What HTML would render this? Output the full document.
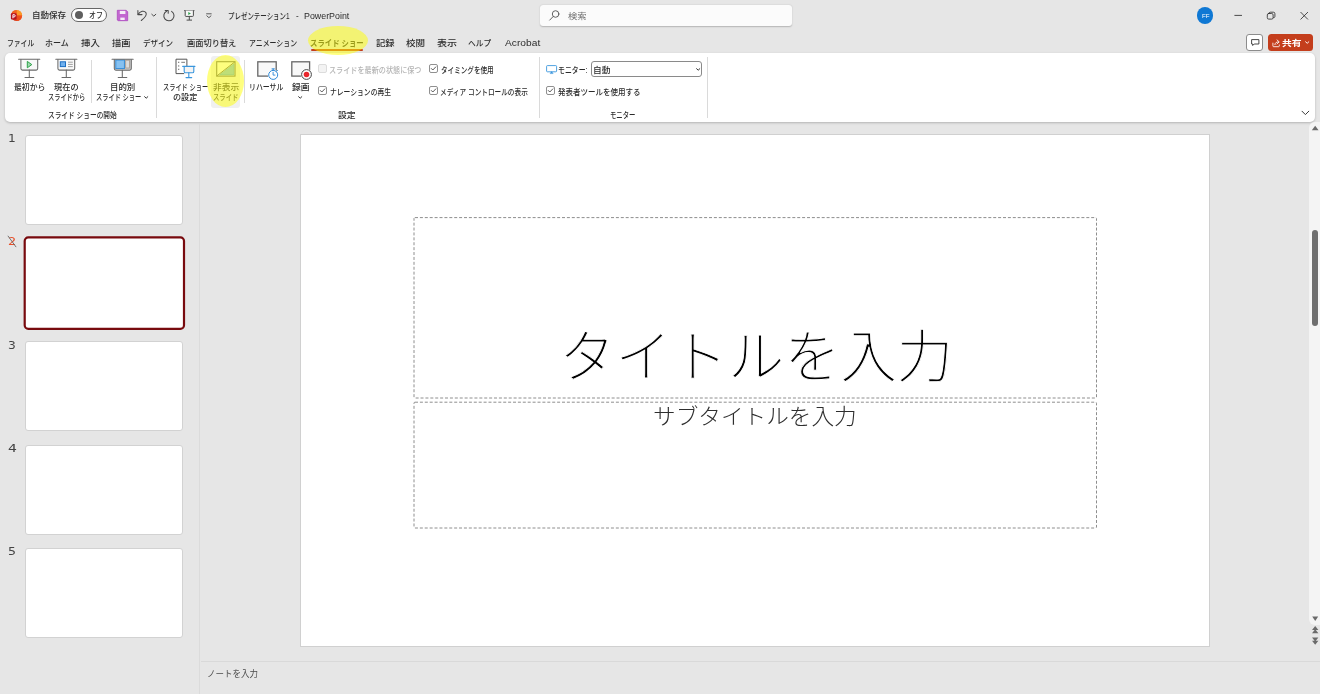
<!DOCTYPE html>
<html lang="ja">
<head>
<meta charset="utf-8">
<title>プレゼンテーション1 - PowerPoint</title>
<style>
*{box-sizing:border-box;margin:0;padding:0}
html,body{width:1320px;height:694px;overflow:hidden;background:#e6e6e6}
body{position:relative;font-family:"Liberation Sans","Noto Sans CJK JP",sans-serif;color:#2b2b2b}
.a{position:absolute}
.txl{position:absolute;left:0;top:0;width:1320px;height:694px;will-change:transform}
.tx{position:absolute;white-space:nowrap;line-height:1;transform-origin:0 0}
svg{position:absolute;overflow:visible}
.ribbon{left:5.4px;top:53px;width:1309.8px;height:69px;background:#fff;border-radius:5px;box-shadow:0 1px 2.5px rgba(0,0,0,.22)}
.gsep{width:1px;background:#dadada;top:57px;height:61px}
.bsep{width:1px;background:#dadada;top:60px;height:43px}
.cb{width:9px;height:9px;border:1px solid #909090;border-radius:2px;background:#fff}
.cb.dis{border-color:#dcdcdc;background:#f3f3f3}
.thumb{left:25px;width:158px;height:90px;background:#fff;border:1px solid #d2d2d2;border-radius:3px}
.hl{background:rgba(255,255,0,.5);border-radius:50%}
</style>
</head>
<body>
<!-- ===== title bar ===== -->
<!-- app logo -->
<svg class="a" style="left:10px;top:9px" width="13" height="13" viewBox="0 0 13 13">
  <defs>
    <linearGradient id="lg1" x1="0" y1="1" x2="1" y2="0"><stop offset="0" stop-color="#c8281c"/><stop offset=".55" stop-color="#f05a1e"/><stop offset="1" stop-color="#fba13a"/></linearGradient>
  </defs>
  <circle cx="6.6" cy="6.5" r="5.5" fill="url(#lg1)"/>
  <path d="M6.6 1A5.5 5.5 0 0 1 12.1 6.5L6.6 6.5Z" fill="#fc9a28" opacity=".95"/>
  <path d="M12.1 6.5A5.5 5.5 0 0 1 6.6 12L6.6 6.5Z" fill="#ee4d1c" opacity=".9"/>
  <path d="M6.6 1A5.5 5.5 0 0 0 1.6 4.2L6.6 6.5Z" fill="#f0601e" opacity=".9"/>
  <rect x=".9" y="4.2" width="5.7" height="6.4" rx="1" fill="#b5121f"/>
  <path d="M2.9 9.3V5.7H4.1A1.1 1.1 0 0 1 4.1 7.9H3" fill="none" stroke="#fff" stroke-width=".95"/>
</svg>
<!-- autosave toggle -->
<div class="a" style="left:71px;top:8px;width:36px;height:14px;border:1px solid #666;border-radius:7px;background:#fff"></div>
<div class="a" style="left:74.5px;top:10.7px;width:8.6px;height:8.6px;border-radius:50%;background:#5f5f5f"></div>
<!-- save -->
<svg class="a" style="left:117px;top:10px" width="11" height="11" viewBox="0 0 11 11">
  <path d="M.3 .3H9.2L10.7 1.8V10.7H1L.3 10Z" fill="#c266d0" stroke="#a93fbb" stroke-width=".7"/>
  <rect x="2.8" y=".9" width="5.6" height="3.1" fill="#f4ecf6"/>
  <rect x="3.3" y="7.6" width="4.4" height="2.4" fill="#f4ecf6"/>
</svg>
<!-- undo -->
<svg class="a" style="left:137px;top:10px" width="20" height="11" viewBox="0 0 20 11" fill="none" stroke="#4a4a4a" stroke-width="1.05" stroke-linecap="round" stroke-linejoin="round">
  <path d="M.9 .6V4.6H5"/>
  <path d="M1.1 4.4C3.2 1 7.2 .2 8.9 2.6C10.3 4.8 8.3 7.3 4.3 10.5"/>
  <path d="M14.8 4.3L16.8 6.1L18.8 4.3" stroke-width="1"/>
</svg>
<!-- redo -->
<svg class="a" style="left:163px;top:10px" width="12" height="11" viewBox="0 0 12 11" fill="none" stroke="#4a4a4a" stroke-width="1.05" stroke-linecap="round" stroke-linejoin="round">
  <path d="M8.6 1.4A5.1 5.1 0 1 1 3.6 1.2"/>
  <path d="M2.2 .4H5.2V3.3"/>
</svg>
<!-- present from beginning (small) -->
<svg class="a" style="left:183.5px;top:10px" width="11" height="11" viewBox="0 0 11 11" fill="none" stroke="#4a4a4a" stroke-width="1">
  <path d="M.2 .6H10.4"/>
  <path d="M1.2 .6V5.6Q1.2 6.4 2 6.4H8.6Q9.4 6.4 9.4 5.6V.6" fill="#f7f7f7"/>
  <path d="M5.3 6.4V10M2.6 10.1H8"/>
  <path d="M4.3 1.9L6.9 3.5L4.3 5.1Z" fill="#2aa148" stroke="none"/>
</svg>
<!-- customize QAT -->
<svg class="a" style="left:206px;top:12.5px" width="6" height="6" viewBox="0 0 6 6" fill="none" stroke="#4a4a4a" stroke-width=".9" stroke-linecap="round" stroke-linejoin="round">
  <path d="M.6 .8H5.2"/><path d="M.8 2.8L2.9 4.7L5 2.8"/>
</svg>
<!-- search box -->
<div class="a" style="left:540px;top:5px;width:252px;height:21px;background:#fbfbfb;border-radius:3px;box-shadow:0 .8px 1.5px rgba(0,0,0,.22)"></div>
<svg class="a" style="left:548.5px;top:10px" width="11" height="11" viewBox="0 0 11 11" fill="none" stroke="#5a5a5a" stroke-width=".95" stroke-linecap="round">
  <circle cx="6.6" cy="4" r="3.3"/><path d="M4.2 6.5L.7 10.1"/>
</svg>
<!-- avatar -->
<div class="a" style="left:1196.7px;top:7px;width:16.8px;height:16.8px;border-radius:50%;background:#0f78d4"></div>
<!-- window controls -->
<svg class="a" style="left:1230px;top:8px" width="84" height="16" viewBox="0 0 84 16" fill="none" stroke="#2f2f2f" stroke-width=".85" stroke-linecap="round">
  <path d="M4.8 7.4H11.6"/>
  <rect x="37.3" y="5.5" width="5.8" height="5.6" rx="1.4"/>
  <path d="M39 5.3Q39 4.2 40.2 4.2H43.4Q44.9 4.2 44.9 5.7V8.6Q44.9 9.6 43.6 9.7"/>
  <path d="M70.8 4.3L77.7 11.2M77.7 4.3L70.8 11.2"/>
</svg>

<!-- ===== tabs ===== -->
<!-- active tab underline -->
<div class="a" style="left:311px;top:49px;width:52px;height:1.6px;background:#c43e1c;border-radius:1px"></div>
<!-- comments button -->
<div class="a" style="left:1246.3px;top:34px;width:16.4px;height:16.5px;border:1px solid #8c8c8c;border-radius:3px;background:#fff"></div>
<svg class="a" style="left:1250.5px;top:38.5px" width="9" height="8" viewBox="0 0 9 8" fill="none" stroke="#333" stroke-width=".9" stroke-linejoin="round">
  <path d="M.6 .6H7.9V5H3.2L1.7 6.5V5H.6Z"/>
</svg>
<!-- share button -->
<div class="a" style="left:1268px;top:34px;width:44.6px;height:16.6px;border-radius:3.5px;background:#c43e1c"></div>
<svg class="a" style="left:1271.6px;top:38.6px" width="9" height="9" viewBox="0 0 9 9" fill="none" stroke="#fff" stroke-width=".85" stroke-linecap="round" stroke-linejoin="round">
  <path d="M.9 4.1V6.9Q.9 7.7 1.7 7.7H6.5Q7.3 7.7 7.3 6.9V5.9"/>
  <path d="M2.9 5.7C3 3.9 4.2 2.9 6.2 2.9"/>
  <path d="M5 .9L7.2 2.9L5 4.9"/>
</svg>
<svg class="a" style="left:1305.3px;top:41px" width="5" height="4" viewBox="0 0 5 4" fill="none" stroke="#fff" stroke-width=".95" stroke-linecap="round" stroke-linejoin="round">
  <path d="M.6 .8L2.2 2.3L3.8 .8"/>
</svg>

<!-- ===== ribbon ===== -->
<div class="a ribbon"></div>
<!-- group separators -->
<div class="a gsep" style="left:156px"></div>
<div class="a gsep" style="left:538.5px"></div>
<div class="a gsep" style="left:706.7px"></div>
<div class="a bsep" style="left:91px"></div>
<div class="a bsep" style="left:244.2px"></div>
<!-- hidden-slide button hover bg -->
<div class="a" style="left:211.2px;top:55.8px;width:28.6px;height:51.8px;background:#f0f0f0;border-radius:3px"></div>
<!-- icon: from beginning -->
<svg class="a" style="left:18px;top:58px" width="23" height="21" viewBox="0 0 23 21" fill="none" stroke="#6a6a6a" stroke-width="1.05">
  <path d="M2.9 1.2V10.6Q2.9 12.1 4.4 12.1H18.2Q19.7 12.1 19.7 10.6V1.2" fill="#f8f8f8"/>
  <path d="M.6 1.2H21.8" stroke-linecap="round"/>
  <path d="M11.3 12.1V19.4M7 19.4H15.8" stroke-linecap="round"/>
  <path d="M9.3 3.4L13.8 6.6L9.3 9.8Z" fill="#9fd8ae" stroke="#2ea34a" stroke-width="1" stroke-linejoin="round"/>
</svg>
<!-- icon: from current slide -->
<svg class="a" style="left:55px;top:58px" width="23" height="21" viewBox="0 0 23 21" fill="none" stroke="#6a6a6a" stroke-width="1.05">
  <path d="M2.9 1.2V10.6Q2.9 12.1 4.4 12.1H18.2Q19.7 12.1 19.7 10.6V1.2" fill="#f8f8f8"/>
  <path d="M.8 1.2H21.9" stroke-linecap="round"/>
  <path d="M11.3 12.1V19.4M7 19.4H15.7" stroke-linecap="round"/>
  <rect x="5.3" y="3.8" width="5.2" height="4.8" fill="#6fb0ee" stroke="#1b6ec2" stroke-width="1"/>
  <path d="M13 4.2H17.8M13 6.4H17.8M13 8.6H17.8" stroke="#8a8a8a" stroke-width=".8"/>
</svg>
<!-- icon: custom slide show -->
<svg class="a" style="left:111px;top:58px" width="23" height="21" viewBox="0 0 23 21" fill="none" stroke="#6a6a6a" stroke-width="1.05">
  <path d="M3.3 1.2V10.6Q3.3 12.2 4.8 12.2H18.8Q20.3 12.2 20.3 10.6V1.2" fill="#c9c9c9"/>
  <rect x="4.8" y="2" width="8.6" height="8.6" fill="#86c1f1" stroke="#2b88d8" stroke-width=".9"/>
  <rect x="14.7" y="2.2" width="3.7" height="7.8" fill="#dcdcdc" stroke="#a89a8c" stroke-width=".8"/>
  <path d="M1 1.2H22.2" stroke-linecap="round"/>
  <path d="M11.3 12.2V19.4M7.2 19.4H15.8" stroke-linecap="round"/>
</svg>
<svg class="a" style="left:143.8px;top:95.8px" width="5" height="4" viewBox="0 0 5 4" fill="none" stroke="#333" stroke-width="1" stroke-linecap="round" stroke-linejoin="round"><path d="M.6 .7L2.2 2.2L3.8 .7"/></svg>
<!-- icon: set up slide show -->
<svg class="a" style="left:175px;top:58px" width="21" height="21" viewBox="0 0 21 21" fill="none">
  <path d="M9.2 15.6H1V1.2H11.9V8.2" stroke="#555" stroke-width="1"/>
  <rect x="3" y="3.7" width="1.3" height="1.3" fill="#8a8a8a"/><rect x="3" y="7.3" width="1.3" height="1.3" fill="#8a8a8a"/><rect x="3" y="10.7" width="1.3" height="1.3" fill="#8a8a8a"/>
  <path d="M6.3 4.3H10" stroke="#6a6a6a" stroke-width=".9"/>
  <path d="M9.2 8.4V13.4Q9.2 14.8 10.6 14.8H17.4Q18.8 14.8 18.8 13.4V8.4" fill="#f4f4f4" stroke="#3a96dd" stroke-width="1.1"/>
  <path d="M7.7 8.4H19.9" stroke="#3a96dd" stroke-width="1.1" stroke-linecap="round"/>
  <path d="M13.8 14.8V19.5M11 19.6H16.7" stroke="#3a96dd" stroke-width="1.1" stroke-linecap="round"/>
</svg>
<!-- icon: hide slide -->
<svg class="a" style="left:215.5px;top:60.5px" width="20.5" height="16" viewBox="0 0 20.5 16" fill="none">
  <rect x=".7" y=".7" width="18.3" height="14.4" fill="#fdfdfd" stroke="#6a6a6a" stroke-width="1.1"/>
  <path d="M3.6 13.9L17.9 2.9V13.9Z" fill="#7dbdf0" stroke="#4a9fe0" stroke-width=".7" stroke-linejoin="round"/>
  <path d="M.9 14.9L18.8 .9" stroke="#6a6a6a" stroke-width="1"/>
</svg>
<!-- icon: rehearse timings -->
<svg class="a" style="left:256.5px;top:60.5px" width="23" height="21" viewBox="0 0 23 21" fill="none">
  <rect x=".8" y=".8" width="18.4" height="14.3" fill="#f8f8f8" stroke="#666" stroke-width="1.3"/>
  <circle cx="16.2" cy="13.9" r="5.4" fill="#fff"/>
  <circle cx="16.2" cy="13.9" r="4.5" fill="#fff" stroke="#2b88d8" stroke-width="1"/>
  <path d="M16.2 9.4V8.1M15 7.9H17.4M19.6 10.3L20.5 9.4" stroke="#2b88d8" stroke-width="1" stroke-linecap="round"/>
  <path d="M16.1 11.3V14.1H18" stroke="#2b88d8" stroke-width=".9" stroke-linecap="round"/>
</svg>
<!-- icon: record -->
<svg class="a" style="left:290.5px;top:60.5px" width="23" height="21" viewBox="0 0 23 21" fill="none">
  <rect x=".8" y=".8" width="17.8" height="14.3" fill="#f8f8f8" stroke="#666" stroke-width="1.3"/>
  <circle cx="15.5" cy="13.5" r="5.8" fill="#fff"/>
  <circle cx="15.5" cy="13.5" r="4.9" fill="#fff" stroke="#444" stroke-width="1"/>
  <circle cx="15.5" cy="13.5" r="2.8" fill="#e8262c"/>
</svg>
<svg class="a" style="left:298.2px;top:96.4px" width="5" height="4" viewBox="0 0 5 4" fill="none" stroke="#333" stroke-width="1" stroke-linecap="round" stroke-linejoin="round"><path d="M.6 .7L2.2 2.2L3.8 .7"/></svg>
<!-- checkboxes -->
<div class="a cb dis" style="left:318.3px;top:64px"></div>
<div class="a cb" style="left:318.3px;top:86px"></div>
<div class="a cb" style="left:429.2px;top:64px"></div>
<div class="a cb" style="left:429.2px;top:86px"></div>
<div class="a cb" style="left:545.8px;top:86px"></div>
<svg class="a" style="left:318.3px;top:86px" width="9" height="9" viewBox="0 0 9 9" fill="none" stroke="#3c3c3c" stroke-width=".85" stroke-linecap="round" stroke-linejoin="round"><path d="M2.3 4.5L3.8 6L6.8 2.9"/></svg>
<svg class="a" style="left:429.2px;top:64px" width="9" height="9" viewBox="0 0 9 9" fill="none" stroke="#3c3c3c" stroke-width=".85" stroke-linecap="round" stroke-linejoin="round"><path d="M2.3 4.5L3.8 6L6.8 2.9"/></svg>
<svg class="a" style="left:429.2px;top:86px" width="9" height="9" viewBox="0 0 9 9" fill="none" stroke="#3c3c3c" stroke-width=".85" stroke-linecap="round" stroke-linejoin="round"><path d="M2.3 4.5L3.8 6L6.8 2.9"/></svg>
<svg class="a" style="left:545.8px;top:86px" width="9" height="9" viewBox="0 0 9 9" fill="none" stroke="#3c3c3c" stroke-width=".85" stroke-linecap="round" stroke-linejoin="round"><path d="M2.3 4.5L3.8 6L6.8 2.9"/></svg>
<!-- monitor icon -->
<svg class="a" style="left:546px;top:64.8px" width="12" height="10" viewBox="0 0 12 10" fill="none" stroke="#3a96dd" stroke-width=".9" stroke-linejoin="round">
  <rect x=".6" y=".6" width="10" height="6.2" rx=".8" fill="#fff"/>
  <path d="M5.6 6.6L7.2 8.6H4Z" fill="#3a96dd" stroke-width=".4"/>
</svg>
<!-- monitor select -->
<div class="a" style="left:590.7px;top:61.3px;width:111.4px;height:15.8px;border:1px solid #8a8a8a;border-radius:3px;background:#fff"></div>
<svg class="a" style="left:695.6px;top:67.5px" width="5" height="4" viewBox="0 0 5 4" fill="none" stroke="#333" stroke-width="1" stroke-linecap="round" stroke-linejoin="round"><path d="M.6 .7L2.2 2.2L3.8 .7"/></svg>
<!-- collapse ribbon -->
<svg class="a" style="left:1301px;top:110px" width="9" height="6" viewBox="0 0 9 6" fill="none" stroke="#3a3a3a" stroke-width="1" stroke-linecap="round" stroke-linejoin="round"><path d="M1 1.2L4.4 4.6L7.8 1.2"/></svg>

<!-- ===== left panel ===== -->
<div class="a" style="left:199px;top:124px;width:1px;height:570px;background:#dbdbdb"></div>
<div class="a thumb" style="top:135px"></div>
<svg class="a" style="left:0;top:0" width="200" height="340"><rect x="24.7" y="237.4" width="159.3" height="91.4" rx="3.6" fill="#fff" stroke="#780a0e" stroke-width="2.2"/></svg>
<div class="a thumb" style="top:341.4px"></div>
<div class="a thumb" style="top:444.8px"></div>
<div class="a thumb" style="top:548.2px"></div>

<!-- ===== main ===== -->
<!-- slide -->
<div class="a" style="left:300px;top:134px;width:910px;height:513px;background:#fff;border:1px solid #d0d0d0"></div>
<!-- placeholders -->
<svg class="a" style="left:0;top:0" width="1320" height="694" fill="none" stroke="#8e8e8e" stroke-width="1" stroke-dasharray="3 1.9" shape-rendering="auto">
  <rect x="414" y="217.6" width="682.5" height="180.4" rx="1"/>
  <rect x="414" y="402.2" width="682.5" height="125.8" rx="1"/>
</svg>
<!-- notes separator -->
<div class="a" style="left:201px;top:661px;width:1119px;height:1px;background:#d9d9d9"></div>
<!-- vertical scrollbar -->
<div class="a" style="left:1309.2px;top:122px;width:12px;height:502.5px;background:#f4f4f4;border-radius:6px 0 0 6px"></div>
<div class="a" style="left:1312.3px;top:229.6px;width:6.2px;height:96px;background:#6e6e6e;border-radius:3.1px"></div>
<svg class="a" style="left:1311px;top:124px" width="9" height="530" viewBox="0 0 9 530" fill="#6a6a6a">
  <path d="M.8 6.2L4.2 1.8L7.6 6.2Z"/>
  <path d="M1.2 492.6L4.2 497L7.2 492.6Z"/>
  <path d="M1 506L4.2 502L7.4 506ZM1 509.2L4.2 505.2L7.4 509.2Z"/>
  <path d="M1 513.6L4.2 517.6L7.4 513.6ZM1 516.8L4.2 520.8L7.4 516.8Z"/>
</svg>

<!-- ===== text ===== -->
<div class="txl">
<span class="tx" id="t0" style="left:32.00px;top:12.00px;font-size:8.25px;color:#2b2b2b;font-weight:500;transform:scale(1.0318,1.0000);">自動保存</span>
<span class="tx" id="t1" style="left:89.00px;top:12.00px;font-size:8.25px;color:#2b2b2b;font-weight:500;transform:scale(0.8390,1.0000);">オフ</span>
<span class="tx" id="t2" style="left:228.00px;top:13.00px;font-size:8.25px;color:#2b2b2b;font-weight:500;transform:scale(0.7831,1.0000);">プレゼンテーション1</span>
<span class="tx" id="t3" style="left:296.00px;top:13.38px;font-size:8.25px;color:#2b2b2b;font-weight:500;transform:scale(0.9817,1.0000);">-</span>
<span class="tx" id="t4" style="left:304.00px;top:13.45px;font-size:8.25px;color:#2b2b2b;font-weight:500;transform:scale(1.0728,1.0000);">PowerPoint</span>
<span class="tx" id="t5" style="left:568.00px;top:13.00px;font-size:8.25px;color:#6e6e6e;font-weight:400;transform:scale(1.1252,1.0000);">検索</span>
<span class="tx" id="t6" style="left:1202.00px;top:13.06px;font-size:6px;color:#fff;font-weight:500;transform:scale(1.0306,1.0000);">FF</span>
<span class="tx" id="t7" style="left:7.00px;top:40.00px;font-size:8.25px;color:#2b2b2b;font-weight:500;transform:scale(0.8257,1.0000);">ファイル</span>
<span class="tx" id="t8" style="left:45.00px;top:40.00px;font-size:8.25px;color:#2b2b2b;font-weight:500;transform:scale(0.9703,1.0000);">ホーム</span>
<span class="tx" id="t9" style="left:81.00px;top:40.00px;font-size:8.25px;color:#2b2b2b;font-weight:500;transform:scale(1.1398,1.0000);">挿入</span>
<span class="tx" id="t10" style="left:112.00px;top:40.00px;font-size:8.25px;color:#2b2b2b;font-weight:500;transform:scale(1.1136,1.0000);">描画</span>
<span class="tx" id="t11" style="left:143.00px;top:40.00px;font-size:8.25px;color:#2b2b2b;font-weight:500;transform:scale(0.9139,1.0000);">デザイン</span>
<span class="tx" id="t12" style="left:187.00px;top:40.00px;font-size:8.25px;color:#2b2b2b;font-weight:500;transform:scale(0.9963,1.0000);">画面切り替え</span>
<span class="tx" id="t13" style="left:249.00px;top:40.00px;font-size:8.25px;color:#2b2b2b;font-weight:500;transform:scale(0.8374,1.0000);">アニメーション</span>
<span class="tx" id="t14" style="left:310.00px;top:40.00px;font-size:8.25px;color:#333;font-weight:700;transform:scale(0.8943,1.0000);">スライド ショー</span>
<span class="tx" id="t15" style="left:376.00px;top:40.00px;font-size:8.25px;color:#2b2b2b;font-weight:500;transform:scale(1.1281,1.0000);">記録</span>
<span class="tx" id="t16" style="left:406.00px;top:40.00px;font-size:8.25px;color:#2b2b2b;font-weight:500;transform:scale(1.1571,1.0000);">校閲</span>
<span class="tx" id="t17" style="left:437.00px;top:40.00px;font-size:8.25px;color:#2b2b2b;font-weight:500;transform:scale(1.2130,1.0000);">表示</span>
<span class="tx" id="t18" style="left:468.00px;top:40.00px;font-size:8.25px;color:#2b2b2b;font-weight:500;transform:scale(0.9330,1.0000);">ヘルプ</span>
<span class="tx" id="t19" style="left:505.00px;top:40.18px;font-size:8.25px;color:#2b2b2b;font-weight:500;transform:scale(1.2386,1.0000);">Acrobat</span>
<span class="tx" id="t20" style="left:1282.00px;top:40.00px;font-size:8.25px;color:#fff;font-weight:700;transform:scale(1.1878,1.0000);">共有</span>
<span class="tx" id="t21" style="left:14.00px;top:84.00px;font-size:8.25px;color:#2b2b2b;font-weight:500;transform:scale(0.9494,1.0000);">最初から</span>
<span class="tx" id="t22" style="left:54.00px;top:84.00px;font-size:8.25px;color:#2b2b2b;font-weight:500;transform:scale(0.9962,1.0000);">現在の</span>
<span class="tx" id="t23" style="left:48.00px;top:94.00px;font-size:8.25px;color:#2b2b2b;font-weight:500;transform:scale(0.7525,1.0000);">スライドから</span>
<span class="tx" id="t24" style="left:110.00px;top:84.00px;font-size:8.25px;color:#2b2b2b;font-weight:500;transform:scale(1.0210,1.0000);">目的別</span>
<span class="tx" id="t25" style="left:96.00px;top:94.00px;font-size:8.25px;color:#2b2b2b;font-weight:500;transform:scale(0.7538,1.0000);">スライド ショー</span>
<span class="tx" id="t26" style="left:163.00px;top:84.00px;font-size:8.25px;color:#2b2b2b;font-weight:500;transform:scale(0.7517,1.0000);">スライド ショー</span>
<span class="tx" id="t27" style="left:173.00px;top:94.00px;font-size:8.25px;color:#2b2b2b;font-weight:500;transform:scale(0.9801,1.0000);">の設定</span>
<span class="tx" id="t28" style="left:213.00px;top:84.00px;font-size:8.25px;color:#444;font-weight:500;transform:scale(1.0605,1.0000);">非表示</span>
<span class="tx" id="t29" style="left:213.00px;top:94.00px;font-size:8.25px;color:#444;font-weight:500;transform:scale(0.7695,1.0000);">スライド</span>
<span class="tx" id="t30" style="left:249.00px;top:84.00px;font-size:8.25px;color:#2b2b2b;font-weight:500;transform:scale(0.8350,1.0000);">リハーサル</span>
<span class="tx" id="t31" style="left:292.00px;top:84.00px;font-size:8.25px;color:#2b2b2b;font-weight:500;transform:scale(1.0605,1.0000);">録画</span>
<span class="tx" id="t32" style="left:329.00px;top:67.00px;font-size:8.25px;color:#b4b4b4;font-weight:500;transform:scale(0.8622,1.0000);">スライドを最新の状態に保つ</span>
<span class="tx" id="t33" style="left:330.00px;top:89.00px;font-size:8.25px;color:#2b2b2b;font-weight:500;transform:scale(0.8240,1.0000);">ナレーションの再生</span>
<span class="tx" id="t34" style="left:441.00px;top:67.00px;font-size:8.25px;color:#2b2b2b;font-weight:500;transform:scale(0.7978,1.0000);">タイミングを使用</span>
<span class="tx" id="t35" style="left:440.00px;top:89.00px;font-size:8.25px;color:#2b2b2b;font-weight:500;transform:scale(0.8059,1.0000);">メディア コントロールの表示</span>
<span class="tx" id="t36" style="left:558.00px;top:67.00px;font-size:8.25px;color:#2b2b2b;font-weight:500;transform:scale(0.8352,1.0000);">モニター:</span>
<span class="tx" id="t37" style="left:593.00px;top:67.00px;font-size:8.25px;color:#2b2b2b;font-weight:500;transform:scale(1.0527,1.0000);">自動</span>
<span class="tx" id="t38" style="left:558.00px;top:89.00px;font-size:8.25px;color:#2b2b2b;font-weight:500;transform:scale(0.9076,1.0000);">発表者ツールを使用する</span>
<span class="tx" id="t39" style="left:48.00px;top:112.00px;font-size:8.25px;color:#2b2b2b;font-weight:500;transform:scale(0.8106,1.0000);">スライド ショーの開始</span>
<span class="tx" id="t40" style="left:338.00px;top:112.00px;font-size:8.25px;color:#2b2b2b;font-weight:500;transform:scale(1.0736,1.0000);">設定</span>
<span class="tx" id="t41" style="left:610.00px;top:112.00px;font-size:8.25px;color:#2b2b2b;font-weight:500;transform:scale(0.7721,1.0000);">モニター</span>
<span class="tx" id="t42" style="left:8.00px;top:132.85px;font-size:10.3px;color:#444;font-weight:500;font-family:'DejaVu Sans',sans-serif;transform:scale(1.1809,1.0000);">1</span>
<span class="tx" id="t43" style="left:8.00px;top:236.45px;font-size:10.3px;color:#e8502a;font-weight:500;font-family:'DejaVu Sans',sans-serif;transform:scale(1.2487,1.0000);">2</span>
<span class="tx" id="t44" style="left:8.00px;top:339.85px;font-size:10.3px;color:#444;font-weight:500;font-family:'DejaVu Sans',sans-serif;transform:scale(1.1863,1.0000);">3</span>
<span class="tx" id="t45" style="left:8.00px;top:443.24px;font-size:10.3px;color:#444;font-weight:500;font-family:'DejaVu Sans',sans-serif;transform:scale(1.3592,1.0000);">4</span>
<span class="tx" id="t46" style="left:8.00px;top:545.85px;font-size:10.3px;color:#444;font-weight:500;font-family:'DejaVu Sans',sans-serif;transform:scale(1.2150,1.0000);">5</span>
<span class="tx" id="t47" style="left:559.00px;top:330.30px;font-size:55px;color:#000;font-weight:300;-webkit-text-stroke:.9px #fff;transform:scale(1.0237,1.0258);">タイトルを入力</span>
<span class="tx" id="t48" style="left:653.00px;top:407.35px;font-size:22px;color:#2e2e2e;font-weight:300;transform:scale(1.0288,0.9688);">サブタイトルを入力</span>
<span class="tx" id="t49" style="left:207.00px;top:669.64px;font-size:8.9px;color:#4a4a4a;font-weight:400;transform:scale(0.9603,1.0000);">ノートを入力</span>
</div>
<!-- ===== overlays ===== -->
<!-- hidden slide strike -->
<svg class="a" style="left:7px;top:235px" width="10" height="13" viewBox="0 0 10 13" fill="none" stroke="#686868" stroke-width=".9" stroke-linecap="round"><path d="M1.1 1.1L8.9 11.8"/></svg>
<!-- yellow highlight annotations -->
<div class="a hl" style="left:308px;top:26px;width:60px;height:29px"></div>
<div class="a hl" style="left:207px;top:54.7px;width:37px;height:52.4px"></div>

</body>
</html>
